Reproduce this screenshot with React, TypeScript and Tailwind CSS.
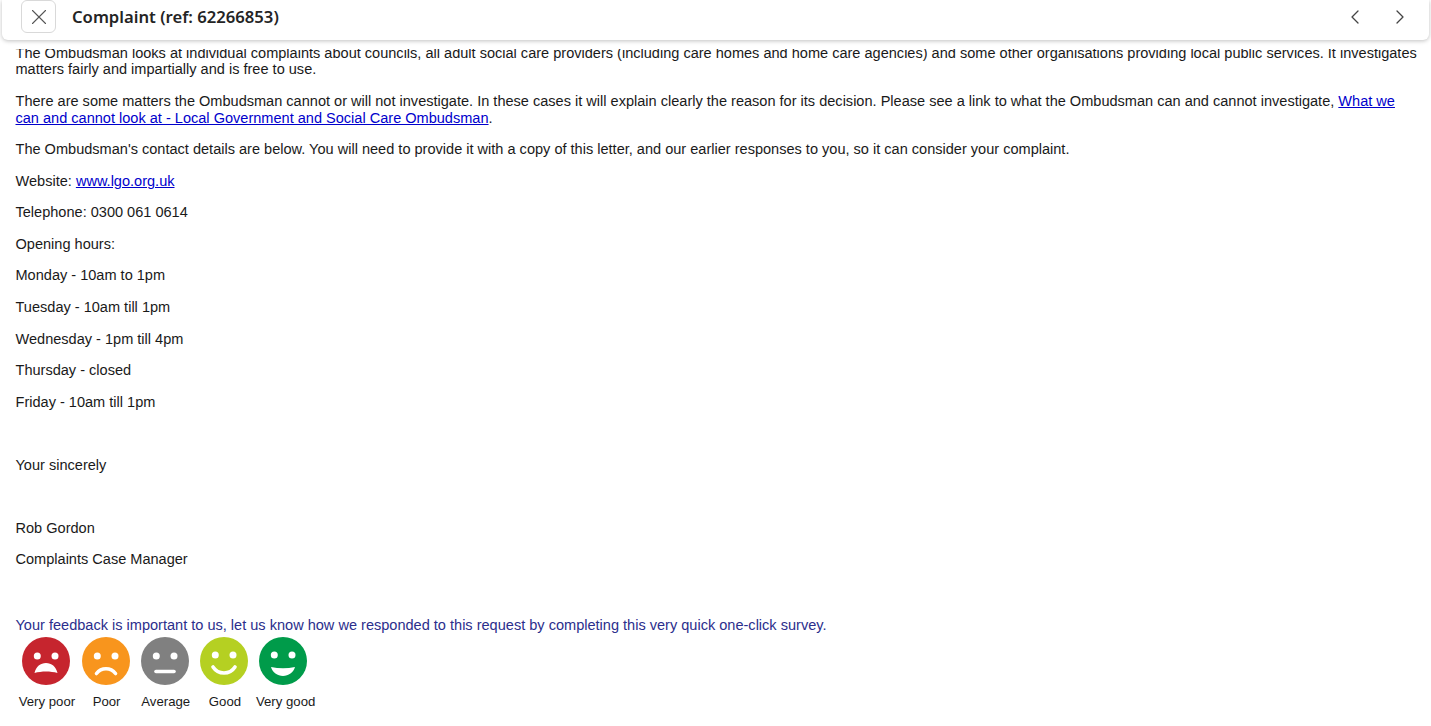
import React from "react";
import { ChevronLeft, ChevronRight, X } from "lucide-react";

const ratings = [
    { label: "Very poor", labelClass: "pl-[1px]", color: "#c6252e", eyeY: 19, mouth: "M12.500 36c1.500-6.500 6-10 11.500-10s10 3.500 11.500 10c-7-2-16-2-23 0z", fill: true },
    { label: "Poor", labelClass: "pl-[2px]", color: "#f8951d", eyeY: 19, mouth: "M14.500 36.500c2.500-3.200 5.500-4.700 9.500-4.700s7 1.500 9.500 4.700", fill: false },
    { label: "Average", labelClass: "pl-[2px]", color: "#808080", eyeY: 19, mouth: "M15 34.500h18", fill: false },
    { label: "Good", labelClass: "pl-[2px]", color: "#b5d022", eyeY: 18, mouth: "M13 30c2.500 3.800 6.500 6 11 6s8.500-2.200 11-6", fill: false },
    { label: "Very good", labelClass: "pl-[5px]", color: "#009b4a", eyeY: 18, mouth: "M12 30c8 1.700 16 1.700 24 0c-1.500 5.500-6.500 9-12 9s-10.500-3.500-12-9z", fill: true },
];

function Face({ color, eyeY, mouth, fill }: { color: string; eyeY: number; mouth: string; fill: boolean }) {
    return (
        <svg width="48" height="48" viewBox="0 0 48 48" className="block">
            <circle cx="24" cy="24" r="24" fill={color} />
            <circle cx="15.300" cy={eyeY} r="3.500" fill="#fff" />
            <circle cx="33" cy={eyeY} r="3.500" fill="#fff" />
            {fill ? (
                <path d={mouth} fill="#fff" />
            ) : (
                <path d={mouth} fill="none" stroke="#fff" strokeWidth="3.600" strokeLinecap="round" />
            )}
        </svg>
    );
}

export default function App() {
    return (
        <div className="h-[726px] w-[1431px] overflow-hidden bg-white flex flex-col font-['Liberation_Sans',Arial,sans-serif] text-[14.56px] text-[#1a1a1a]">
            <div className="h-[49px] shrink-0 bg-white">
                <div className="mx-[2px] h-[40px] bg-white rounded-b-[6px] shadow-[0_1px_4px_rgba(0,0,0,0.25)] flex items-center pl-[19px] pr-[17px]">
                    <button className="w-[35px] h-[33px] -mt-[7px] flex items-center justify-center border border-[#d9d9d9] rounded-[6px] bg-white text-[#555]">
                        <X size={26} strokeWidth={1} />
                    </button>
                    <div className="ml-[16px] -mt-[6px] font-['Noto_Sans',sans-serif] font-semibold text-[16.65px] text-[#242424]">
                        Complaint (ref: 62266853)
                    </div>
                    <div className="ml-auto -mt-[7px] flex items-center gap-[21px] text-[#444]">
                        <ChevronLeft size={24} strokeWidth={1.3} />
                        <ChevronRight size={24} strokeWidth={1.3} />
                    </div>
                </div>
            </div>
            <div className="flex-1 overflow-hidden pl-[15.500px] pr-[11px]">
                <div className="-mt-[4.500px] leading-[16.87px] flex flex-col gap-[14.67px]">
                    <p>
                        The Ombudsman looks at individual complaints about councils, all adult social care providers (including care homes and home care agencies) and some other organisations providing local public services. It investigates matters fairly and impartially and is free to use.
                    </p>
                    <p>
                        There are some matters the Ombudsman cannot or will not investigate. In these cases it will explain clearly the reason for its decision. Please see a link to what the Ombudsman can and cannot investigate,{" "}
                        <a href="#" className="text-[#0000cc] underline">What we can and cannot look at - Local Government and Social Care Ombudsman</a>.
                    </p>
                    <p>The Ombudsman's contact details are below. You will need to provide it with a copy of this letter, and our earlier responses to you, so it can consider your complaint.</p>
                    <p>Website: <a href="#" className="text-[#0000cc] underline">www.lgo.org.uk</a></p>
                    <p>Telephone: 0300 061 0614</p>
                    <p>Opening hours:</p>
                    <p>Monday - 10am to 1pm</p>
                    <p>Tuesday - 10am till 1pm</p>
                    <p>Wednesday - 1pm till 4pm</p>
                    <p>Thursday - closed</p>
                    <p>Friday - 10am till 1pm</p>
                    <p>&nbsp;</p>
                    <p>Your sincerely</p>
                    <p>&nbsp;</p>
                    <p>Rob Gordon</p>
                    <p>Complaints Case Manager</p>
                    <p className="mt-[34px] text-[#2b2e8c]">
                        Your feedback is important to us, let us know how we responded to this request by completing this very quick one-click survey.
                    </p>
                </div>
                <div className="flex mt-[3.500px] pl-[1.300px]">
                    {ratings.map((r) => (
                        <div key={r.label} className="w-[59.200px] flex flex-col items-center">
                            <Face color={r.color} eyeY={r.eyeY} mouth={r.mouth} fill={r.fill} />
                            <div className={`mt-[9px] text-[13.2px] leading-[16px] whitespace-nowrap ${r.labelClass}`}>{r.label}</div>
                        </div>
                    ))}
                </div>
            </div>
        </div>
    );
}
